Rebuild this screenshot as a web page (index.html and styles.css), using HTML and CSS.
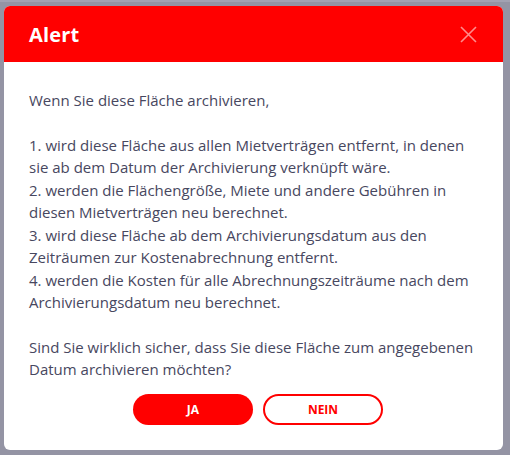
FILE: index.html
```html
<!DOCTYPE html>
<html lang="de">
<head>
<meta charset="utf-8">
<link rel="stylesheet" href="styles.css">
</head>
<body>
<div class="topstrip"></div>
<div class="modal">
  <div class="modal-header">
    <h1 class="modal-title">Alert</h1>
    <button class="close" aria-label="Schließen">
      <svg width="17" height="17" viewBox="0 0 17 17"><path d="M1 1L16 16M16 1L1 16" stroke="currentColor" stroke-width="1.6" fill="none"/></svg>
    </button>
  </div>
  <div class="modal-body">
    <p>Wenn Sie diese Fläche archivieren,</p>
    <p>1. wird diese Fläche aus allen Mietverträgen entfernt, in denen sie ab dem Datum der Archivierung verknüpft wäre.<br>
    2. werden die Flächengröße, Miete und andere Gebühren in diesen Mietverträgen neu berechnet.<br>
    3. wird diese Fläche ab dem Archivierungsdatum aus den Zeiträumen zur Kostenabrechnung entfernt.<br>
    4. werden die Kosten für alle Abrechnungszeiträume nach dem Archivierungsdatum neu berechnet.</p>
    <p>Sind Sie wirklich sicher, dass Sie diese Fläche zum angegebenen Datum archivieren möchten?</p>
  </div>
  <div class="modal-footer">
    <button class="btn btn-primary">JA</button>
    <button class="btn btn-outline">NEIN</button>
  </div>
</div>
</body>
</html>
```
FILE: styles.css
```css
html, body {
  margin: 0;
  padding: 0;
}
body {
  background: #9494a4;
  height: 455px;
  font-family: "Open Sans", "Noto Sans", sans-serif;
  padding: 6px 7px 5px 4px;
  box-sizing: border-box;
}
.topstrip {
  position: absolute;
  left: 0;
  top: 0;
  width: 100%;
  height: 2px;
  background: #a2a2b2;
}
.modal {
  position: relative;
  background: #fff;
  border-radius: 6px;
  overflow: hidden;
  height: 444px;
  display: flex;
  flex-direction: column;
}
.modal-header {
  background: #ff0000;
  height: 56px;
  display: flex;
  align-items: center;
  justify-content: space-between;
  padding: 0 25px;
}
.modal-title {
  margin: 0;
  color: #fff;
  font-size: 20px;
  font-weight: 700;
  letter-spacing: 0.2px;
}
.close {
  background: none;
  border: 0;
  padding: 0;
  color: rgba(255, 255, 255, 0.55);
  display: flex;
  margin-right: 1px;
}
.modal-body {
  padding: 27px 25px 0 25px;
  color: #474760;
  font-size: 15px;
  line-height: 22.5px;
}
.modal-body p {
  margin: 0 0 22px 0;
}
.modal-footer {
  display: flex;
  justify-content: center;
  gap: 10px;
  padding-left: 9px;
  margin-top: -9px;
}
.btn {
  width: 120px;
  height: 31px;
  border-radius: 16px;
  font-family: "Open Sans", sans-serif;
  font-weight: 700;
  font-size: 12px;
  text-transform: uppercase;
  cursor: pointer;
}
.btn-primary {
  background: #ff0000;
  color: #fff;
  border: 0;
}
.btn-outline {
  background: #fff;
  color: #ff0000;
  border: 2px solid #ff0000;
}
```
